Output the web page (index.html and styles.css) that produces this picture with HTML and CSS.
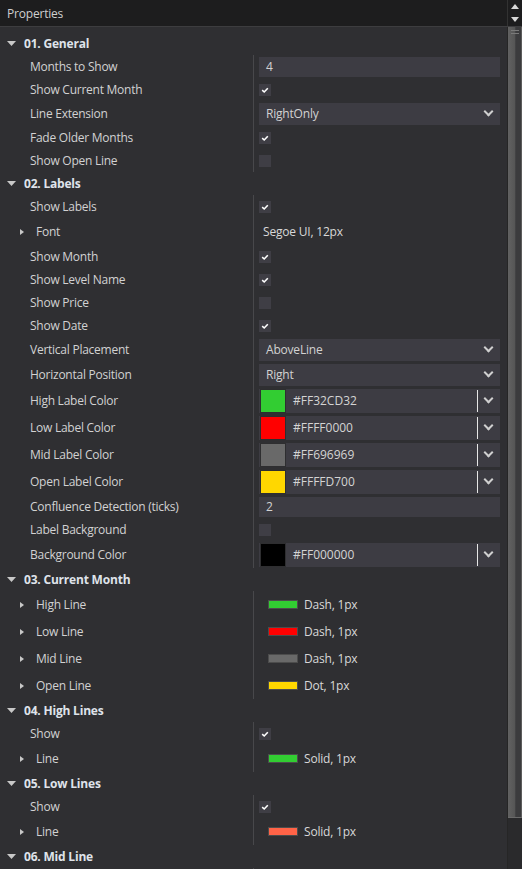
FILE: index.html
```html
<!DOCTYPE html>
<html lang="en">

<head>
    <meta charset="UTF-8">
    <meta name="viewport" content="width=device-width, initial-scale=1.0">
    <title>Properties</title>
    <link rel="stylesheet" href="styles.css">
</head>

<body>
    <div class="panel">
        <div class="titlebar">
            <span class="title">Properties</span>
            <div class="spin">
                <svg width="8" height="5" viewBox="0 0 8 5"><polygon points="4,0 8,5 0,5" fill="#d8d8d8"/></svg>
                <svg width="8" height="5" viewBox="0 0 8 5"><polygon points="0,0 8,0 4,5" fill="#d8d8d8"/></svg>
            </div>
        </div>

        <div class="body">
            <div class="list">

                <div class="group">
                    <div class="group-head"><svg class="caret" width="9" height="5" viewBox="0 0 9 5"><polygon points="0,0 9,0 4.5,5" fill="#c8c8c8"/></svg>01. General</div>
                    <div class="row r23"><div class="name">Months to Show</div><div class="value"><div class="textbox">4</div></div></div>
                    <div class="row r23"><div class="name">Show Current Month</div><div class="value"><div class="check on"></div></div></div>
                    <div class="row r25"><div class="name">Line Extension</div><div class="value"><div class="combo">RightOnly<span class="chev"></span></div></div></div>
                    <div class="row r23"><div class="name">Fade Older Months</div><div class="value"><div class="check on"></div></div></div>
                    <div class="row r23"><div class="name">Show Open Line</div><div class="value"><div class="check"></div></div></div>
                </div>

                <div class="group">
                    <div class="group-head"><svg class="caret" width="9" height="5" viewBox="0 0 9 5"><polygon points="0,0 9,0 4.5,5" fill="#c8c8c8"/></svg>02. Labels</div>
                    <div class="row r23"><div class="name">Show Labels</div><div class="value"><div class="check on"></div></div></div>
                    <div class="row r27"><div class="name sub"><span class="arrow"></span>Font</div><div class="value"><span class="plain">Segoe UI, 12px</span></div></div>
                    <div class="row r23"><div class="name">Show Month</div><div class="value"><div class="check on"></div></div></div>
                    <div class="row r23"><div class="name">Show Level Name</div><div class="value"><div class="check on"></div></div></div>
                    <div class="row r23"><div class="name">Show Price</div><div class="value"><div class="check"></div></div></div>
                    <div class="row r23"><div class="name">Show Date</div><div class="value"><div class="check on"></div></div></div>
                    <div class="row r25"><div class="name">Vertical Placement</div><div class="value"><div class="combo">AboveLine<span class="chev"></span></div></div></div>
                    <div class="row r25"><div class="name">Horizontal Position</div><div class="value"><div class="combo">Right<span class="chev"></span></div></div></div>
                    <div class="row r27"><div class="name">High Label Color</div><div class="value"><div class="colorbox"><span class="swatch" style="background:#32CD32"></span><span class="hex">#FF32CD32</span><span class="split"></span><span class="chev"></span></div></div></div>
                    <div class="row r27"><div class="name">Low Label Color</div><div class="value"><div class="colorbox"><span class="swatch" style="background:#FF0000"></span><span class="hex">#FFFF0000</span><span class="split"></span><span class="chev"></span></div></div></div>
                    <div class="row r27"><div class="name">Mid Label Color</div><div class="value"><div class="colorbox"><span class="swatch" style="background:#696969"></span><span class="hex">#FF696969</span><span class="split"></span><span class="chev"></span></div></div></div>
                    <div class="row r27"><div class="name">Open Label Color</div><div class="value"><div class="colorbox"><span class="swatch" style="background:#FFD700"></span><span class="hex">#FFFFD700</span><span class="split"></span><span class="chev"></span></div></div></div>
                    <div class="row r23"><div class="name">Confluence Detection (ticks)</div><div class="value"><div class="textbox">2</div></div></div>
                    <div class="row r23"><div class="name">Label Background</div><div class="value"><div class="check"></div></div></div>
                    <div class="row r27"><div class="name">Background Color</div><div class="value"><div class="colorbox"><span class="swatch" style="background:#000000"></span><span class="hex">#FF000000</span><span class="split"></span><span class="chev"></span></div></div></div>
                </div>

                <div class="group">
                    <div class="group-head"><svg class="caret" width="9" height="5" viewBox="0 0 9 5"><polygon points="0,0 9,0 4.5,5" fill="#c8c8c8"/></svg>03. Current Month</div>
                    <div class="row r27"><div class="name sub"><span class="arrow"></span>High Line</div><div class="value"><span class="stroke" style="background:#32CD32"></span><span class="plain">Dash, 1px</span></div></div>
                    <div class="row r27"><div class="name sub"><span class="arrow"></span>Low Line</div><div class="value"><span class="stroke" style="background:#FF0000"></span><span class="plain">Dash, 1px</span></div></div>
                    <div class="row r27"><div class="name sub"><span class="arrow"></span>Mid Line</div><div class="value"><span class="stroke" style="background:#696969"></span><span class="plain">Dash, 1px</span></div></div>
                    <div class="row r27"><div class="name sub"><span class="arrow"></span>Open Line</div><div class="value"><span class="stroke" style="background:#FFD700"></span><span class="plain">Dot, 1px</span></div></div>
                </div>

                <div class="group">
                    <div class="group-head"><svg class="caret" width="9" height="5" viewBox="0 0 9 5"><polygon points="0,0 9,0 4.5,5" fill="#c8c8c8"/></svg>04. High Lines</div>
                    <div class="row r23"><div class="name">Show</div><div class="value"><div class="check on"></div></div></div>
                    <div class="row r27"><div class="name sub"><span class="arrow"></span>Line</div><div class="value"><span class="stroke" style="background:#32CD32"></span><span class="plain">Solid, 1px</span></div></div>
                </div>

                <div class="group">
                    <div class="group-head"><svg class="caret" width="9" height="5" viewBox="0 0 9 5"><polygon points="0,0 9,0 4.5,5" fill="#c8c8c8"/></svg>05. Low Lines</div>
                    <div class="row r23"><div class="name">Show</div><div class="value"><div class="check on"></div></div></div>
                    <div class="row r27"><div class="name sub"><span class="arrow"></span>Line</div><div class="value"><span class="stroke" style="background:#FF6347"></span><span class="plain">Solid, 1px</span></div></div>
                </div>

                <div class="group">
                    <div class="group-head"><svg class="caret" width="9" height="5" viewBox="0 0 9 5"><polygon points="0,0 9,0 4.5,5" fill="#c8c8c8"/></svg>06. Mid Line</div>
                    <div class="row r23"><div class="name"></div><div class="value"></div></div>
                </div>

            </div>

            <div class="scrollbar">
                <div class="thumb"><span class="grip"></span></div>
            </div>
        </div>
    </div>
</body>

</html>
```

FILE: styles.css
```css
body {
    margin: 0;
    padding: 0;
    background-color: #2f2f32;
    font-family: "Open Sans", "Noto Sans", Arial, sans-serif;
    font-size: 12px;
    color: #d2d2d2;
    overflow: hidden;
}

.panel {
    width: 522px;
    height: 869px;
    display: flex;
    flex-direction: column;
}

.titlebar {
    height: 26px;
    flex: none;
    display: flex;
    align-items: center;
    background-color: #1d1d1e;
    border-bottom: 1px solid #3d3d3f;
}

.title {
    flex: 1;
    padding-left: 7px;
    color: #cfcfcf;
    letter-spacing: -0.2px;
}

.spin {
    width: 14px;
    height: 26px;
    border-left: 1px solid #323232;
    display: flex;
    flex-direction: column;
    align-items: center;
    justify-content: center;
    gap: 8px;
}

.body {
    flex: 1;
    display: flex;
    overflow: hidden;
}

.list {
    width: 507px;
    padding-top: 5px;
}

.group-head {
    height: 23px;
    display: flex;
    align-items: center;
    font-weight: bold;
    color: #dfe3ea;
    letter-spacing: -0.2px;
}

.caret {
    margin: 0 8px 0 7px;
}

.row {
    display: flex;
    align-items: stretch;
}

.r23 { height: 23px; }
.r25 { height: 25px; }
.r27 { height: 27px; }

.name {
    width: 223px;
    padding-left: 30px;
    display: flex;
    align-items: center;
    white-space: nowrap;
    letter-spacing: -0.25px;
}

.name.sub {
    width: 233px;
    padding-left: 20px;
}

.arrow {
    width: 0;
    height: 0;
    border-top: 3.5px solid transparent;
    border-bottom: 3.5px solid transparent;
    border-left: 4px solid #c8c8c8;
    margin-right: 12px;
}

.value {
    flex: 1;
    border-left: 1px solid #48484b;
    padding: 0 7px 0 5px;
    display: flex;
    align-items: center;
}

.textbox {
    flex: 1;
    height: 20px;
    line-height: 20px;
    padding-left: 7px;
    background-color: #3d3c43;
}

.combo {
    flex: 1;
    height: 22px;
    display: flex;
    align-items: center;
    padding-left: 7px;
    background-color: #3d3c43;
    letter-spacing: -0.2px;
}

.chev {
    margin-left: auto;
    width: 5px;
    height: 5px;
    border-right: 2px solid #cfcfcf;
    border-bottom: 2px solid #cfcfcf;
    transform: rotate(45deg);
    margin-right: 8px;
    margin-top: -4px;
}

.check {
    width: 12px;
    height: 12px;
    background-color: #3f3e45;
}

.check.on {
    background-image: url("data:image/svg+xml;utf8,<svg xmlns='http://www.w3.org/2000/svg' width='12' height='12'><path d='M3.2 6.2 L5.2 8 L8.8 4.2' fill='none' stroke='white' stroke-width='1.6'/></svg>");
}

.colorbox {
    flex: 1;
    height: 24px;
    display: flex;
    align-items: center;
    background-color: #3d3c43;
}

.swatch {
    width: 24px;
    height: 22px;
    margin-left: 1px;
    border: 1px solid #2e2e30;
}

.hex {
    flex: 1;
    padding-left: 7px;
    color: #d4d4d4;
}

.split {
    width: 1px;
    height: 22px;
    background-color: #e6e6e6;
}

.colorbox .chev {
    margin-left: 7px;
}

.plain {
    padding-left: 4px;
    color: #d8d8d8;
    letter-spacing: -0.2px;
}

.stroke {
    width: 28px;
    height: 7px;
    margin-left: 9px;
    margin-right: 2px;
    border: 1px solid #4c4c4c;
}

.scrollbar {
    width: 14px;
    background-color: #2a2a2c;
    border-left: 1px solid #262626;
}

.thumb {
    height: 790px;
    background: linear-gradient(to right, #626262 0, #555555 50%, #3b3b3d 55%, #3b3b3d 90%, #5c5c5c 92%);
    border-bottom: 1px solid #6a6a6a;
    position: relative;
}

.grip {
    position: absolute;
    left: 3px;
    top: 3px;
    width: 8px;
    height: 2px;
    border-top: 1px solid #7a7a7a;
    border-bottom: 1px solid #7a7a7a;
}
```
